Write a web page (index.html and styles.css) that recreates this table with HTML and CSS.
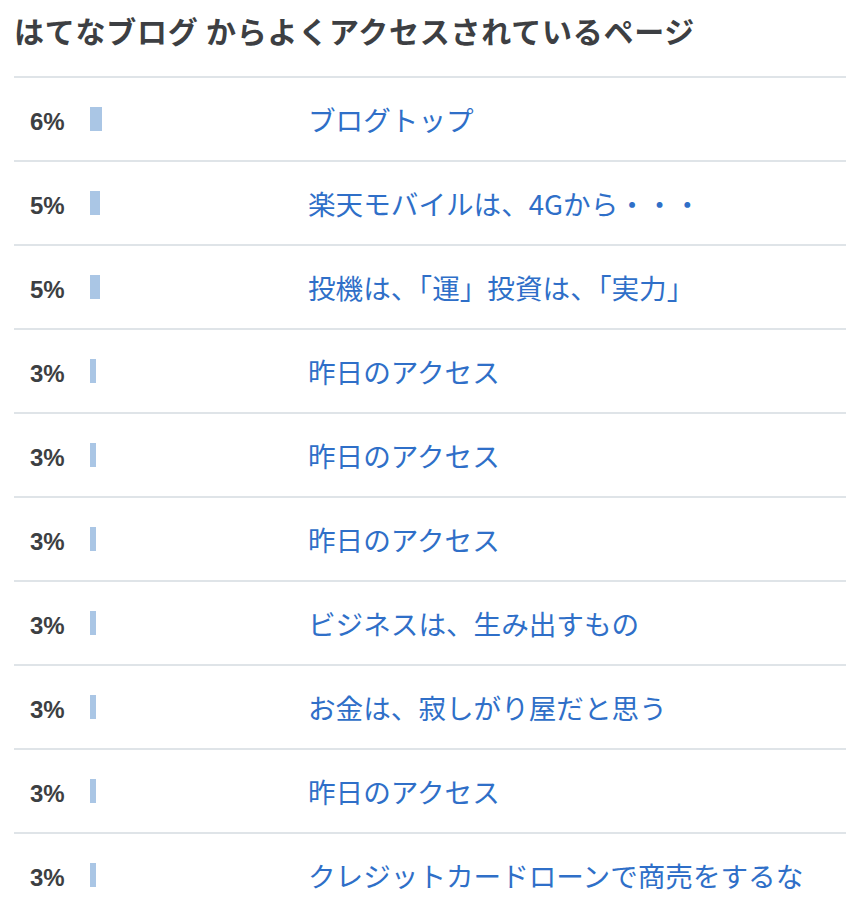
FILE: index.html
```html
<!DOCTYPE html>
<html lang="ja">
<head>
<meta charset="utf-8">
<title>はてなブログ からよくアクセスされているページ</title>
<link rel="stylesheet" href="styles.css">
</head>
<body>
<section class="panel">
  <h2 class="panel-title">はてなブログ からよくアクセスされているページ</h2>
  <ul class="rank-list">
    <li class="rank-row"><span class="pct">6%</span><span class="bar-cell"><span class="bar" style="width:12px"></span></span><a class="page-link" href="#">ブログトップ</a></li>
    <li class="rank-row"><span class="pct">5%</span><span class="bar-cell"><span class="bar" style="width:10px"></span></span><a class="page-link" href="#">楽天モバイルは、4Gから・・・</a></li>
    <li class="rank-row"><span class="pct">5%</span><span class="bar-cell"><span class="bar" style="width:10px"></span></span><a class="page-link" href="#">投機は、「運」投資は、「実力」</a></li>
    <li class="rank-row"><span class="pct">3%</span><span class="bar-cell"><span class="bar" style="width:6px"></span></span><a class="page-link" href="#">昨日のアクセス</a></li>
    <li class="rank-row"><span class="pct">3%</span><span class="bar-cell"><span class="bar" style="width:6px"></span></span><a class="page-link" href="#">昨日のアクセス</a></li>
    <li class="rank-row"><span class="pct">3%</span><span class="bar-cell"><span class="bar" style="width:6px"></span></span><a class="page-link" href="#">昨日のアクセス</a></li>
    <li class="rank-row"><span class="pct">3%</span><span class="bar-cell"><span class="bar" style="width:6px"></span></span><a class="page-link" href="#">ビジネスは、生み出すもの</a></li>
    <li class="rank-row"><span class="pct">3%</span><span class="bar-cell"><span class="bar" style="width:6px"></span></span><a class="page-link" href="#">お金は、寂しがり屋だと思う</a></li>
    <li class="rank-row"><span class="pct">3%</span><span class="bar-cell"><span class="bar" style="width:6px"></span></span><a class="page-link" href="#">昨日のアクセス</a></li>
    <li class="rank-row"><span class="pct">3%</span><span class="bar-cell"><span class="bar" style="width:6px"></span></span><a class="page-link" href="#">クレジットカードローンで商売をするな</a></li>
  </ul>
</section>
</body>
</html>
```
FILE: styles.css
```css
html, body {
  margin: 0;
  padding: 0;
  background: #ffffff;
}
body {
  font-family: "Noto Sans CJK JP", "Noto Sans", sans-serif;
  color: #3d3f43;
}
.panel {
  padding-left: 14px;
}
.panel-title {
  margin: 0;
  padding-top: 8px;
  height: 44px;
  line-height: 44px;
  margin-bottom: 24px;
  font-size: 30px;
  font-weight: 700;
  color: #3d3f43;
  letter-spacing: 0.75px;
  white-space: nowrap;
}
.rank-list {
  list-style: none;
  margin: 0;
  padding: 0;
}
.rank-row {
  display: grid;
  grid-template-columns: 60px 218px 1fr;
  align-items: center;
  height: 82px;
  border-top: 2px solid #dfe4e8;
  padding-left: 16px;
}
.pct {
  font-family: "Liberation Sans", Arial, sans-serif;
  font-weight: 700;
  font-size: 24px;
  color: #3d3f43;
  padding-top: 6px;
}
.bar-cell {
  display: flex;
  align-items: center;
}
.bar {
  display: block;
  height: 24px;
  background: #aac6e5;
}
.page-link {
  font-size: 27.6px;
  color: #2f6fc8;
  text-decoration: none;
  white-space: nowrap;
}
```
